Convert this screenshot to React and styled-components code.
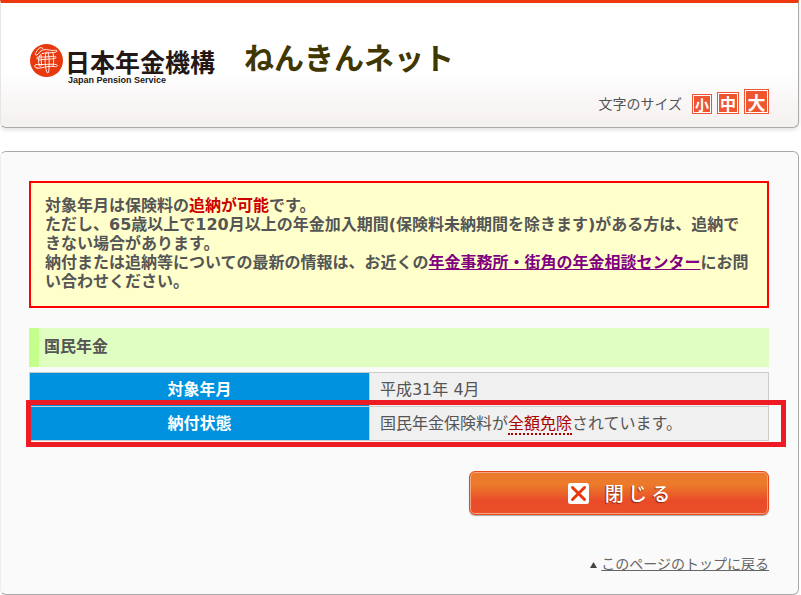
import React from "react";
import styled, { createGlobalStyle } from "styled-components";

const GlobalStyle = createGlobalStyle`
  *, *::before, *::after { box-sizing: border-box; }
  body {
    margin: 0;
    background: #fff;
    color: #555;
    font-family: "DejaVu Sans", "Noto Sans CJK JP", sans-serif;
    font-size: 16px;
  }
`;

const Page = styled.div`
  padding-right: 2px;
`;

const Header = styled.header`
  display: flex;
  flex-direction: column;
  padding: 40px 29px 13px 28px;
  border: 1px solid #aaa;
  border-top: 3px solid #ee390e;
  border-left-color: #e6e6e6;
  border-radius: 0 0 6px 6px;
  background: linear-gradient(#fff 55%, #f5f1f0 96%);
  box-shadow: 0 2px 4px rgba(0, 0, 0, 0.12);
`;

const Brand = styled.div`
  display: flex;
  align-items: flex-start;
`;

const LogoLink = styled.a`
  display: flex;
  gap: 2px;
  color: #231815;
  text-decoration: none;
`;

const LogoMark = styled.svg`
  width: 34px;
  height: 34px;
`;

const LogoText = styled.span`
  display: flex;
  flex-direction: column;
  padding-top: 3px;
`;

const LogoName = styled.span`
  font: 700 25px/30px "Noto Sans CJK JP", sans-serif;
`;

const LogoSub = styled.span`
  padding-left: 3px;
  font: 700 9px/9px "Liberation Sans", sans-serif;
`;

const SiteTitle = styled.h1`
  margin: 0 0 0 29px;
  color: #403600;
  font: 700 30px/26px "Noto Sans CJK JP", sans-serif;
`;

const SizePicker = styled.div`
  display: flex;
  justify-content: flex-end;
  align-items: flex-end;
  gap: 5px;
  margin-top: 4px;
`;

const SizeLabel = styled.span`
  margin-right: 5px;
  font-size: 14px;
  line-height: 20px;
`;

const SizeButton = styled.button`
  display: flex;
  align-items: center;
  justify-content: center;
  width: ${(p) => p.$box}px;
  height: ${(p) => p.$box}px;
  padding: 0;
  border: 1px solid #ee5530;
  background: #ee5530;
  box-shadow: inset 0 0 0 1px #fff;
  color: #fff;
  font: 700 ${(p) => p.$text}px/1 "Noto Sans CJK JP", sans-serif;
  cursor: pointer;
`;

const Main = styled.main`
  margin-top: 23px;
  padding: 29px 29px 20px 28px;
  border: 1px solid #aaa;
  border-left-color: #eee;
  border-radius: 6px;
  background: #fafafa;
`;

const Notice = styled.p`
  margin: 0;
  padding: 13px 16px 15px 14px;
  border: 2px solid #f00;
  background: #ffc;
  font-weight: 700;
  line-height: 19px;
`;

const Emphasis = styled.strong`
  color: #c00;
  font-weight: 700;
`;

const NoticeLink = styled.a`
  color: #800080;
  text-decoration: underline;
`;

const SectionTitle = styled.h2`
  margin: 20px 0 5px;
  padding: 9px 5px 10px;
  border-left: 10px solid #c5ff8b;
  background: #e0fdc2;
  font-size: 16px;
  line-height: 20px;
`;

const StatusArea = styled.div`
  position: relative;
`;

const StatusTable = styled.table`
  width: 100%;
  table-layout: fixed;
  border-collapse: collapse;
`;

const HeadCell = styled.th`
  width: 46%;
  height: 34px;
  padding: 0;
  border: 1px solid #ccc;
  background: #0092df;
  color: #fff;
  line-height: 24px;
`;

const DataCell = styled.td`
  padding: 0 10px;
  border: 1px solid #ccc;
  background: #f0f0f0;
  line-height: 24px;
`;

const Term = styled.a`
  border-bottom: 2px dotted #a00;
  color: #a00;
  text-decoration: none;
`;

const Highlight = styled.div`
  position: absolute;
  left: -3px;
  right: -17px;
  bottom: -6px;
  height: 47px;
  border: 5px solid #ed1c24;
  pointer-events: none;
`;

const Actions = styled.div`
  display: flex;
  justify-content: flex-end;
  margin-top: 30px;
`;

const CloseButton = styled.button`
  display: flex;
  align-items: center;
  justify-content: center;
  gap: 16px;
  width: 300px;
  height: 44px;
  padding: 0;
  border: 1px solid #e8481c;
  border-radius: 6px;
  background: linear-gradient(#eb7a2b 30%, #ea4b29 70%, #ea5029);
  box-shadow: inset 0 0 0 1px #f5a583, 0 1px 1px #aaa;
  color: #fff;
  font: 500 19px/24px "Noto Sans CJK JP", sans-serif;
  text-shadow: -1px 1px 1px #8f2a10;
  cursor: pointer;
`;

const CloseIcon = styled.svg`
  width: 21px;
  height: 21px;
`;

const PageTop = styled.nav`
  display: flex;
  justify-content: flex-end;
  align-items: center;
  gap: 4px;
  margin-top: 40px;
  font-size: 14px;
  line-height: 19px;
`;

const TopArrow = styled.svg`
  width: 7px;
  height: 6px;
`;

const TopLink = styled.a`
  color: #666;
`;

const sizes = [
  { label: "小", box: 20, text: 14 },
  { label: "中", box: 22, text: 16 },
  { label: "大", box: 25, text: 18 },
];

export default function App() {
  return (
    <Page id="top">
      <GlobalStyle />
      <Header>
        <Brand>
          <LogoLink href="#top">
            <LogoMark viewBox="0 0 34 34" aria-hidden="true">
              <circle cx="17.500" cy="17.500" r="16.500" fill="#e8380d" />
              <g fill="none" stroke="#fff" strokeWidth="0.9" strokeLinecap="round" strokeLinejoin="round">
                <path d="M14 5.500C11 3 9 6 7 9.500C5 13 8 13 10 10C12 6.500 17 6 20 7C24 8 28 6.500 28 8C28 10 20 9.500 13 10.500" />
                <path d="M10 16C6 16 7 13.500 12 14C18 14.500 27 12 27 14.500C27 16.500 19 15.500 10 17" />
                <path d="M8 25C4 24 5 21 10 21.500C17 22 27 20 28.500 22.500C28 24.500 24 23 19 23.500C14 24 11 26 8 25Z" />
                <path d="M11 12C9 15 9.500 19 10 22C10.500 24.500 12.500 24 12.500 21C12 17 12.500 14 12 11.500" />
                <path d="M17 9C15.500 15 16 25 18 29.500C19.500 31.500 20 28 20 24C20.500 18 20 12 19 9" />
                <path d="M24 10C25 14 25 19 24 23" />
              </g>
            </LogoMark>
            <LogoText>
              <LogoName>日本年金機構</LogoName>
              <LogoSub>Japan Pension Service</LogoSub>
            </LogoText>
          </LogoLink>
          <SiteTitle>ねんきんネット</SiteTitle>
        </Brand>
        <SizePicker>
          <SizeLabel>文字のサイズ</SizeLabel>
          {sizes.map((s) => (
            <SizeButton key={s.label} type="button" $box={s.box} $text={s.text}>
              {s.label}
            </SizeButton>
          ))}
        </SizePicker>
      </Header>
      <Main>
        <Notice>
          対象年月は保険料の<Emphasis>追納が可能</Emphasis>です。
          <br />
          ただし、65歳以上で120月以上の年金加入期間(保険料未納期間を除きます)がある方は、追納できない場合があります。
          <br />
          納付または追納等についての最新の情報は、お近くの
          <NoticeLink href="#offices">年金事務所・街角の年金相談センター</NoticeLink>
          にお問い合わせください。
        </Notice>
        <SectionTitle>国民年金</SectionTitle>
        <StatusArea>
          <StatusTable>
            <tbody>
              <tr>
                <HeadCell scope="row">対象年月</HeadCell>
                <DataCell>平成31年 4月</DataCell>
              </tr>
              <tr>
                <HeadCell scope="row">納付状態</HeadCell>
                <DataCell>
                  国民年金保険料が<Term href="#exemption">全額免除</Term>されています。
                </DataCell>
              </tr>
            </tbody>
          </StatusTable>
          <Highlight />
        </StatusArea>
        <Actions>
          <CloseButton type="button">
            <CloseIcon viewBox="0 0 21 21" aria-hidden="true">
              <rect width="21" height="21" rx="2.500" fill="#fff" />
              <path d="M4.500 4.500L16.500 16.500M16.500 4.500L4.500 16.500" stroke="#e8380d" strokeWidth="3" strokeLinecap="round" />
            </CloseIcon>
            閉 じ る
          </CloseButton>
        </Actions>
        <PageTop>
          <TopArrow viewBox="0 0 7 6" aria-hidden="true">
            <path d="M3.500 0L7 6H0z" fill="#444" />
          </TopArrow>
          <TopLink href="#top">このページのトップに戻る</TopLink>
        </PageTop>
      </Main>
    </Page>
  );
}
